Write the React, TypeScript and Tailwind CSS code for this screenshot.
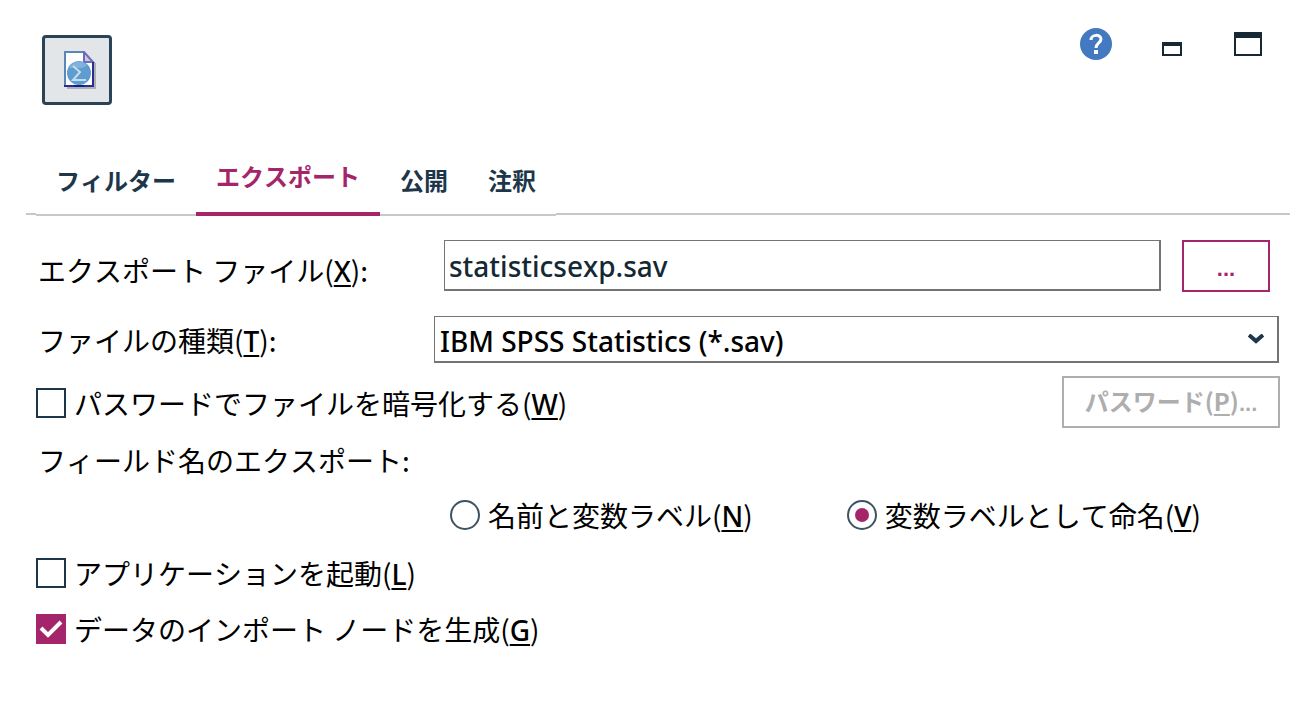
import { ReactNode } from 'react';

const tabs = ['フィルター', 'エクスポート', '公開', '注釈'];
const activeTab = 'エクスポート';

const Key = ({ children }: { children: ReactNode }) => (
    <span className="font-['Noto_Sans',sans-serif] font-medium underline decoration-2 underline-offset-3">{children}</span>
);

const Dots = () => <span className="font-['Liberation_Sans',sans-serif] text-[22px]">...</span>;

interface OptionProps {
    id: string;
    defaultChecked?: boolean;
    children: ReactNode;
}

const CheckOption = ({ id, defaultChecked, children }: OptionProps) => (
    <div className="flex h-10 items-center gap-2">
        <span className="grid shrink-0">
            <input
                id={id}
                type="checkbox"
                defaultChecked={defaultChecked}
                className="peer col-start-1 row-start-1 size-[30px] appearance-none border-2 border-[#1d3649] bg-white checked:border-[#a5256b] checked:bg-[#a5256b]"
            />
            <svg viewBox="0 0 30 30" className="pointer-events-none invisible col-start-1 row-start-1 size-[30px] peer-checked:visible">
                <path d="M5 14l7 7L25 8" fill="none" stroke="#fff" strokeWidth="4" />
            </svg>
        </span>
        <label htmlFor={id}>{children}</label>
    </div>
);

const RadioOption = ({ id, defaultChecked, children }: OptionProps) => (
    <div className="flex h-10 items-center gap-2">
        <span className="grid shrink-0">
            <input
                id={id}
                type="radio"
                name="fieldNames"
                defaultChecked={defaultChecked}
                className="peer col-start-1 row-start-1 size-[30px] appearance-none rounded-full border-2 border-[#3c5364] bg-white"
            />
            <span className="pointer-events-none invisible col-start-1 row-start-1 size-[14px] place-self-center rounded-full bg-[#a5256b] peer-checked:visible" />
        </span>
        <label htmlFor={id}>{children}</label>
    </div>
);

const NodeIcon = () => (
    <svg viewBox="0 0 34 38" className="ml-2 h-[38px] w-[34px]">
        <path d="M3 12h29v26H3z" fill="#adb0b4" />
        <path d="M1 1h19l10 10v25H1z" fill="#fff" />
        <path d="M1 35V1h19" fill="none" stroke="#5b86b8" strokeWidth="2" />
        <path d="M20 1v10h9z" fill="#c9c9e6" stroke="#6f6bb4" strokeWidth="2" />
        <path d="M29 11v24H0" fill="none" stroke="#2c2b8f" strokeWidth="2" />
        <circle cx="15" cy="22" r="12" fill="#5f9ccf" />
        <path d="M5 17a11 11 0 0 1 18-3c-5 5-11 2-18 3z" fill="#82b2dc" />
        <path d="M9 15l7 6-7 8h13" fill="none" stroke="#c3ddf1" strokeWidth="2" />
        <path d="M10 35h10" stroke="#10208a" strokeWidth="2" />
    </svg>
);

const HelpIcon = () => (
    <svg viewBox="0 0 32 32" className="size-8">
        <circle cx="16" cy="16" r="16" fill="#4279c0" />
        <path d="M11 12c0-6 10-6 10-1 0 4-5 4-5 9" fill="none" stroke="#fff" strokeWidth="3" />
        <path d="M14 22h4v4h-4z" fill="#fff" />
    </svg>
);

const Header = () => (
    <header className="flex items-start justify-between pt-[28px] pr-[54px] pl-[42px]">
        <button type="button" aria-label="ノード" className="mt-[7px] grid size-[70px] place-items-center rounded-sm border-3 border-[#2b4356] bg-[#e2e6e9]">
            <NodeIcon />
        </button>
        <div className="flex h-8 items-center">
            <button type="button" aria-label="ヘルプ">
                <HelpIcon />
            </button>
            <button type="button" aria-label="最小化" className="mt-[10px] ml-[50px] h-[14px] w-5 border-2 border-t-4 border-[#152935]" />
            <button type="button" aria-label="最大化" className="ml-[52px] h-6 w-7 border-2 border-t-6 border-[#152935]" />
        </div>
    </header>
);

const TabBar = () => (
    <div className="mx-[26px] mt-[45px] flex items-end text-2xl font-bold text-[#1d3649]">
        <div className="mb-px w-[10px] border-b-2 border-[#c8c8c8]" />
        <div role="tablist" className="flex">
            {tabs.map(tab => (
                <button
                    key={tab}
                    type="button"
                    role="tab"
                    aria-selected={tab === activeTab}
                    className={
                        tab === activeTab
                            ? 'h-[66px] border-b-4 border-[#a5256b] px-5 pb-[10px] text-[#a5256b]'
                            : 'h-[66px] border-b-2 border-[#c8c8c8] px-5 pb-1'
                    }
                >
                    {tab}
                </button>
            ))}
        </div>
        <div className="mb-px grow border-b-2 border-[#c8c8c8]" />
    </div>
);

const App = () => (
    <main className="bg-white font-['Noto_Sans_CJK_JP','Noto_Sans',sans-serif] text-[28px] leading-10 text-black [font-kerning:none]">
        <Header />
        <TabBar />
        <form className="pt-6 pr-9 pb-12 pl-9">
            <div className="flex items-start pr-[10px]">
                <label htmlFor="exportFile" className="w-[408px] shrink-0 pt-[10px] pl-[2px]">
                    エクスポート ファイル(<Key>X</Key>):
                </label>
                <input
                    id="exportFile"
                    type="text"
                    defaultValue="statisticsexp.sav"
                    className="h-[51px] min-w-0 grow border border-r-2 border-b-2 border-[#747474] bg-white pt-[2px] pl-1 font-['Noto_Sans',sans-serif] text-[28px] font-medium text-[#152935]"
                />
                <button type="button" className="ml-[21px] h-[52px] w-[88px] border-2 border-[#a5256b] font-bold text-[#a5256b]">
                    <Dots />
                </button>
            </div>
            <div className="flex items-center pt-6 pr-px">
                <label htmlFor="fileType" className="w-[398px] shrink-0 pt-[2px] pl-[2px]">
                    ファイルの種類(<Key>T</Key>):
                </label>
                <div className="relative grow">
                    <select
                        id="fileType"
                        className="block h-[47px] w-full appearance-none border border-r-2 border-b-2 border-[#747474] bg-white pt-[3px] pl-[5px] font-['Noto_Sans',sans-serif] text-[28px] font-medium"
                    >
                        <option>IBM SPSS Statistics (*.sav)</option>
                    </select>
                    <svg viewBox="0 0 16 10" className="pointer-events-none absolute top-[18px] right-[15px] h-[10px] w-4">
                        <path d="M1 1l7 6 7-6" fill="none" stroke="#1d3649" strokeWidth="4" />
                    </svg>
                </div>
            </div>
            <div className="flex items-center justify-between pt-[13px]">
                <div className="pt-[2px]">
                    <CheckOption id="encrypt">
                        パスワードでファイルを暗号化する(<Key>W</Key>)
                    </CheckOption>
                </div>
                <button type="button" disabled className="h-[52px] w-[218px] border-2 border-[#aeaeae] text-2xl font-bold text-[#aeaeae]">
                    パスワード(<span className="underline decoration-2 underline-offset-3">P</span>)<Dots />
                </button>
            </div>
            <fieldset>
                <legend className="pt-3 pl-[2px]">フィールド名のエクスポート:</legend>
                <div className="flex gap-[94px] pt-[15px] pl-[414px]">
                    <RadioOption id="nameAndLabel">
                        名前と変数ラベル(<Key>N</Key>)
                    </RadioOption>
                    <RadioOption id="labelAsName" defaultChecked>
                        変数ラベルとして命名(<Key>V</Key>)
                    </RadioOption>
                </div>
            </fieldset>
            <div className="flex flex-col gap-4 pt-[18px]">
                <CheckOption id="launch">
                    アプリケーションを起動(<Key>L</Key>)
                </CheckOption>
                <CheckOption id="generate" defaultChecked>
                    データのインポート ノードを生成(<Key>G</Key>)
                </CheckOption>
            </div>
        </form>
    </main>
);

export default App;
